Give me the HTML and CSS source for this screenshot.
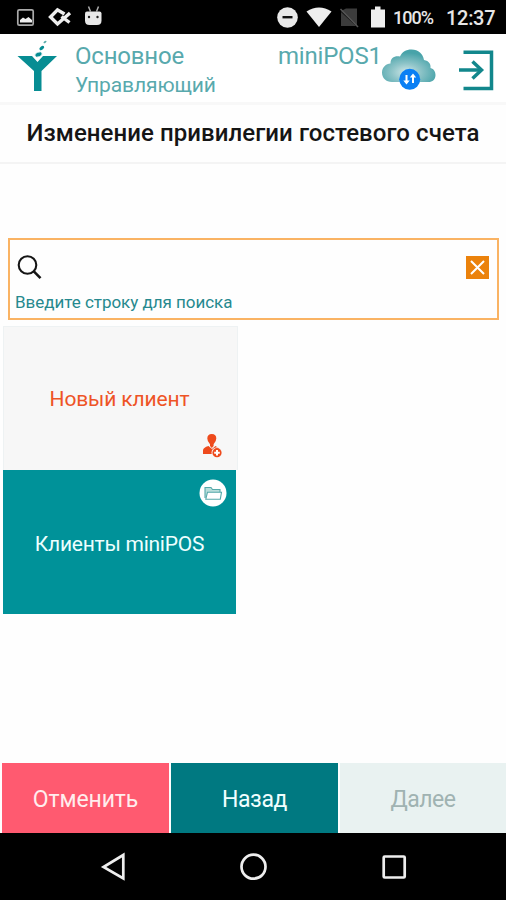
FILE: index.html
```html
<!DOCTYPE html>
<html lang="ru">
<head>
<meta charset="utf-8">
<title>miniPOS</title>
<link rel="stylesheet" href="styles.css">
</head>
<body>
<div class="status">
  <svg class="status-left" width="110" height="34" viewBox="0 0 110 34">
    <rect x="17.800" y="9.800" width="15.400" height="15.400" rx="1.500" fill="none" stroke="#aaa" stroke-width="1.700"/>
    <path d="M20 22.500v-2.500l3-2.500 2.500 1.500 3-2 3.500 3v2.500z" fill="#eee"/>
    <path d="M64.500 14 57.500 9.800 50.500 17l7 7L70 13M61.500 16.500 69.500 22.500" fill="none" stroke="#eee" stroke-width="3.400"/>
    <path d="M88.500 6.500l2 5M98.500 6.500l-2 5" stroke="#aaa" stroke-width="1.500"/>
    <path d="M87 11.500h12.500q2 0 2 2v7q0 4.500-4.500 4.500h-7.500q-4.500 0-4.500-4.500v-7q0-2 2-2z" fill="#e8e8e8"/>
    <circle cx="89" cy="17" r="1.200" fill="#222"/><circle cx="97.500" cy="17" r="1.200" fill="#222"/>
  </svg>
  <svg class="status-right" width="116" height="34" viewBox="273 0 116 34">
    <circle cx="287.500" cy="17.500" r="10.300" fill="#e9e9e9"/><path d="M282.500 17.200h10" stroke="#111" stroke-width="2.400"/>
    <path d="M306.500 11.500Q319 3.500 331.500 11.500L319 27z" fill="#eee"/>
    <path d="M346 8.500h11v17.500l-16-15z M341 12v14h15z" fill="#3c3c3c"/><path d="M340.500 9l17.500 18" stroke="#555" stroke-width="1.500"/>
    <path d="M371 9.500h4V6.500h5.500v3h4.500v18h-14z" fill="#eee"/>
  </svg>
  <span class="battery">100%</span><span class="clock">12:37</span>
</div>
<header class="header">
  <svg class="logo" width="40" height="52" viewBox="17 39 40 52">
    <path d="M17.500 56H32l5.500 6L43 56h14L41.500 71v20h-7.500V71z" fill="#078d93"/>
    <ellipse cx="38.500" cy="54.500" rx="3.800" ry="2.400" fill="#078d93" stroke="#fff" stroke-width=".8" transform="rotate(-20 38.500 54.500)"/>
    <ellipse cx="41.800" cy="48" rx="2.700" ry="1.700" fill="#078d93" transform="rotate(-38 41.800 48)"/>
    <ellipse cx="45" cy="42" rx="1.700" ry="1" fill="#58aaa9" transform="rotate(-35 45 42)"/>
  </svg>
  <div class="who"><div><span class="place">Основное</span></div><div><span class="role">Управляющий</span></div></div>
  <span class="device">miniPOS1</span>
  <svg class="cloud" width="54" height="42" viewBox="382 49 54 42">
    <defs><radialGradient id="cg" cx=".45" cy=".7" r=".6"><stop offset="0" stop-color="#cfe7e8"/><stop offset=".45" stop-color="#8ec4c8"/><stop offset="1" stop-color="#48a3a9"/></radialGradient></defs>
    <path d="M392 82c-6 0-10-4-10-9.500 0-5 4-9 8.500-9 0-5.500 4-8 9.500-7 2-4.500 6-7 11.500-7 7 0 11.500 4.500 12.500 10.500 5 1 7 4 6.500 8 3.500 1 5 4 5 7 0 4.500-3 7-7 7z" fill="url(#cg)"/>
    <circle cx="409.700" cy="79.300" r="10.500" fill="#0b80f4"/>
    <path d="M406.500 75v7.500M413 75.500v7.500" stroke="#fff" stroke-width="2"/><path d="M403.300 80.500h6.400l-3.200 4zM409.800 77.500h6.400l-3.200-4z" fill="#fff"/>
  </svg>
  <svg class="exit" width="36" height="42" viewBox="458 49 36 42" fill="none" stroke="#12878c" stroke-width="3.500">
    <path d="M463.500 52.200h28v36.200h-28M459 70h23" /><path d="M472.500 61.500l9 8.500-9 8.500" />
  </svg>
</header>
<h1 class="title"><span>Изменение привилегии гостевого счета</span></h1>
<main class="content">
  <section class="search">
    <div class="search-row">
      <svg width="25" height="25" viewBox="17 255 25 25" fill="none" stroke="#151515"><circle cx="27.500" cy="265" r="8.800" stroke-width="2.100"/><path d="M33.800 271.300l6.700 6.800" stroke-width="2.600"/></svg>
      <svg width="23" height="23" viewBox="0 0 23 23"><path d="M0 0h23v23H0z" fill="#eb820c"/><path d="M5 5l13 13M18 5L5 18" stroke="#fff" stroke-width="2"/></svg>
    </div>
    <div class="hint"><span>Введите строку для поиска</span></div>
  </section>
  <div class="tile tile-new"><span>Новый клиент</span>
    <svg class="badge badge-user" width="20" height="24" viewBox="202 434 20 24">
      <path d="M207.300 438.500q0-4.500 4.500-4.500t4.500 4.500q0 3-2.700 5.700v1.800l-1.800 2-1.800-2v-1.800q-2.700-2.700-2.700-5.700zM208.500 446l3.500 3 3.500-3 3 2v6h-15.500v-3.500q0-3 5.500-4.500z" fill="#ee4a1c"/>
      <circle cx="217" cy="452.700" r="5.500" fill="#f6f6f6"/><circle cx="217" cy="452.700" r="4.600" fill="#ee4a1c"/><path d="M214.200 452.700h5.600M217 449.900v5.600" stroke="#fff" stroke-width="2"/>
    </svg>
  </div>
  <div class="tile tile-group"><span>Клиенты miniPOS</span>
    <svg class="badge badge-folder" width="28" height="28" viewBox="199 479 28 28">
      <circle cx="213" cy="493" r="13.500" fill="#fff"/><g fill="#b9dedb" stroke="#55a9aa" stroke-width="1.100"><path d="M205 498v-10.500h6l1.500 2H220v3"/><path d="M207.500 492.200h14l-1.200 7h-14.500z" fill="#fff"/></g>
    </svg>
  </div>
</main>
<footer class="actions">
  <div class="action cancel"><span>Отменить</span></div>
  <div class="action back"><span>Назад</span></div>
  <div class="action next"><span>Далее</span></div>
</footer>
<nav class="nav">
  <svg width="506" height="67" viewBox="0 833 506 67" fill="none" stroke="#eee" stroke-width="2.700">
    <path d="M123.300 855v23.500L103.500 867z"/><circle cx="253.500" cy="866.700" r="12"/><rect x="383.700" y="856.500" width="21" height="21" rx="1"/>
  </svg>
</nav>
</body>
</html>
```
FILE: styles.css
```css
* { box-sizing: border-box; }
body { margin: 0; width: 506px; height: 900px; display: flex; flex-direction: column; background: #fefefe; font-family: Roboto, "Liberation Sans", sans-serif; overflow: hidden; }
svg { display: block; flex: none; }
span { white-space: nowrap; }
.status { height: 34px; background: #000; display: flex; align-items: center; color: #e6e6e6; line-height: 34px; flex: none; }
.status-right { margin-left: 163px; }
.battery { font-size: 18px; margin-left: 4px; width: 53px; padding-top: 2px; letter-spacing: -1px; font-weight: 500; }
.clock { font-size: 20px; font-weight: 500; padding-top: 2px; letter-spacing: -.3px; }
.header { height: 71px; flex: none; background: #fff; border-bottom: 3px solid #f8f8f8; display: flex; align-items: flex-start; color: #58a9ad; }
.logo { margin: 5px 0 0 17px; }
.who { margin: 8px 0 0 18px; width: 203px; line-height: 28px; }
.place { font-size: 24px; letter-spacing: -.2px; }
.role { font-size: 21px; letter-spacing: -.1px; position: relative; top: -2px; }
.device { font-size: 24px; line-height: 28px; margin-top: 8px; width: 104px; letter-spacing: -.2px; }
.cloud { margin-top: 15px; }
.exit { margin: 15px 0 0 22px; }
.title { height: 59px; flex: none; margin: 0; border-bottom: 2px solid #f4f4f4; color: #151515; font-size: 24px; font-weight: 500; line-height: 57px; text-align: center; letter-spacing: .06px; }
.content { flex: 1; padding-top: 74px; }
.search { height: 82px; margin: 0 7px 6px 8px; border: 2px solid #fab363; padding: 15px 8px 0 5px; background: #fefefe; }
.search-row { display: flex; justify-content: space-between; padding-left: 2px; height: 34px; }
.search-row svg:last-child { margin-top: 1px; }
.hint { color: #26898e; font-size: 17px; line-height: 26px; letter-spacing: -.03px; }
.tile { position: relative; display: flex; align-items: center; justify-content: center; height: 144px; margin-left: 3px; font-size: 21px; }
.tile-new { width: 235px; background: #f7f7f7; border: 1px solid #eef2f3; border-bottom: 0; color: #ee5426; letter-spacing: -.15px; padding-right: 2px; }
.tile-group { width: 233px; background: #009299; color: #edffff; letter-spacing: -.25px; padding-top: 4px; }
.badge { position: absolute; }
.badge-user { right: 15px; bottom: 12px; }
.badge-folder { right: 9px; top: 9px; }
.actions { height: 70px; flex: none; display: grid; grid-template-columns: 167px 167px 1fr; gap: 2px; padding-left: 2px; font-size: 23px; line-height: 73px; text-align: center; letter-spacing: -.1px; }
.cancel { background: #ff5a70; color: #ffeded; }
.back { background: #007981; color: #f1ffff; letter-spacing: -.4px; }
.next { background: #e9f2f1; color: #a0b3b2; letter-spacing: -.5px; }
.nav { height: 67px; flex: none; background: #000; }
```
